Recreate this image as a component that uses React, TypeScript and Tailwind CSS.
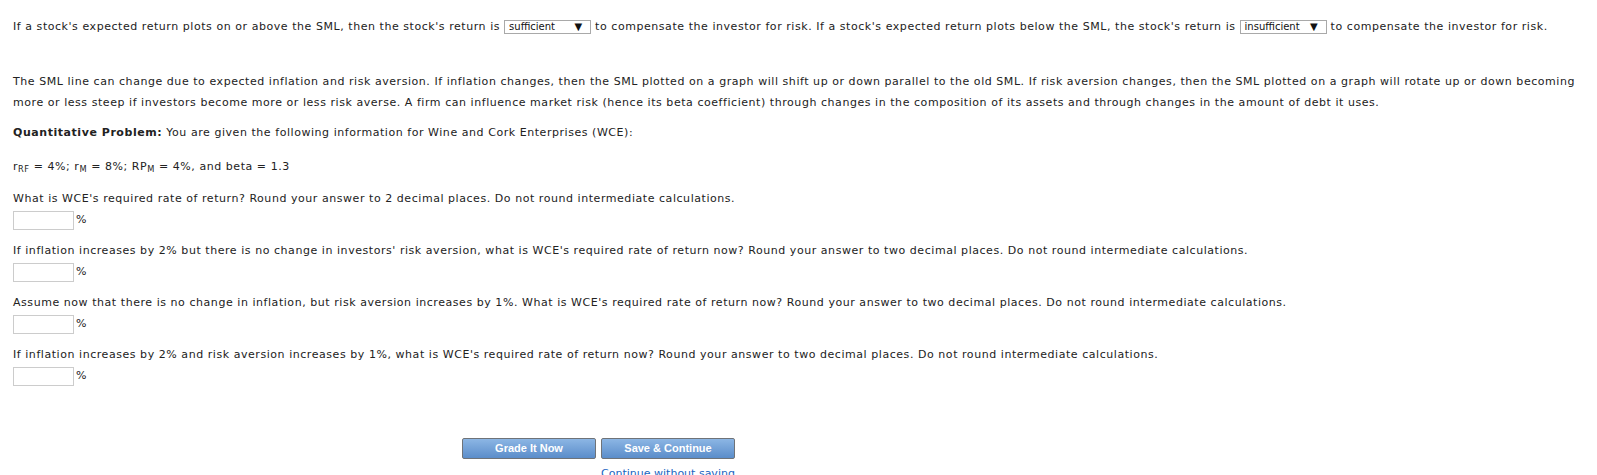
import React from "react";

function Dropdown({ value }: { value: string }) {
  return (
    <span className="inline-flex h-[14px] w-[87px] items-center justify-between border border-[#a9a9a9] bg-white pl-[4px] pr-[8px] text-[10px] leading-none tracking-normal text-[#111]">
      <span>{value}</span>
      <span className="text-[10px]">▼</span>
    </span>
  );
}

function Answer({ question, first }: { question: string; first?: boolean }) {
  return (
    <div className={first ? "mt-[11px]" : "mt-[10px]"}>
      <p className="leading-[21px]">{question}</p>
      <div className="mt-[2px] flex h-[19px] items-center gap-[2px]">
        <input type="text" className="h-[19px] w-[61px] border border-[#cccccc] bg-white px-1 outline-none" />
        <span>%</span>
      </div>
    </div>
  );
}

function BlueButton({ label }: { label: string }) {
  return (
    <button
      type="button"
      className="h-[21px] w-[134px] rounded-[2px] border border-[#6f7378] bg-gradient-to-b from-[#8cb6e4] to-[#5b8dca] font-['Liberation_Sans',sans-serif] text-[11px] font-bold leading-none tracking-normal text-white"
    >
      {label}
    </button>
  );
}

export default function App() {
  return (
    <div className="min-h-[475px] bg-white pl-[13px] font-['DejaVu_Sans',Verdana,sans-serif] text-[11px] tracking-[0.55px] text-[#222]">
      <div className="flex items-center whitespace-pre pt-[16px] leading-[21px]">
        <span>If a stock's expected return plots on or above the SML, then the stock's return is </span>
        <Dropdown value="sufficient" />
        <span> to compensate the investor for risk. If a stock's expected return plots below the SML, the stock's return is </span>
        <Dropdown value="insufficient" />
        <span> to compensate the investor for risk.</span>
      </div>

      <p className="mt-[34px] whitespace-nowrap leading-[21px]">
        The SML line can change due to expected inflation and risk aversion. If inflation changes, then the SML plotted on a graph will shift up or down parallel to the old SML. If risk aversion changes, then the SML plotted on a graph will rotate up or down becoming
        <br />
        more or less steep if investors become more or less risk averse. A firm can influence market risk (hence its beta coefficient) through changes in the composition of its assets and through changes in the amount of debt it uses.
      </p>

      <p className="mt-[9px] leading-[21px]">
        <b>Quantitative Problem:</b> You are given the following information for Wine and Cork Enterprises (WCE):
      </p>

      <p className="mt-[13px] leading-[21px]">
        r<sub>RF</sub> = 4%; r<sub>M</sub> = 8%; RP<sub>M</sub> = 4%, and beta = 1.3
      </p>

      <Answer first question="What is WCE's required rate of return? Round your answer to 2 decimal places. Do not round intermediate calculations." />
      <Answer question="If inflation increases by 2% but there is no change in investors' risk aversion, what is WCE's required rate of return now? Round your answer to two decimal places. Do not round intermediate calculations." />
      <Answer question="Assume now that there is no change in inflation, but risk aversion increases by 1%. What is WCE's required rate of return now? Round your answer to two decimal places. Do not round intermediate calculations." />
      <Answer question="If inflation increases by 2% and risk aversion increases by 1%, what is WCE's required rate of return now? Round your answer to two decimal places. Do not round intermediate calculations." />

      <div className="ml-[449px] mt-[52px] flex gap-[5px]">
        <BlueButton label="Grade It Now" />
        <div className="flex flex-col items-center">
          <BlueButton label="Save & Continue" />
          <a href="#" className="mt-[8px] leading-[14px] tracking-normal text-[#1a66c2]">
            Continue without saving
          </a>
        </div>
      </div>
    </div>
  );
}
